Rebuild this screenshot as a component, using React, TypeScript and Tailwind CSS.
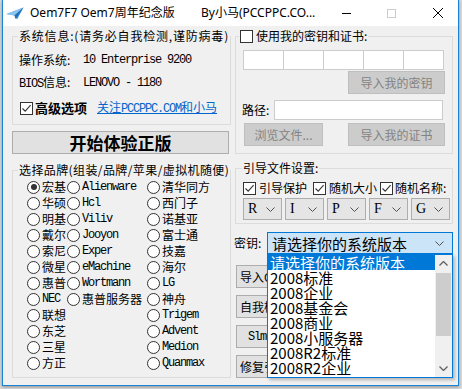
import React from 'react';
import clsx from 'clsx';

const MONO = "font-['Liberation_Mono','Noto_Sans_CJK_SC',monospace] text-[12px] tracking-[-1.2px]";

const Check = ({ on }: { on?: boolean }) => (
  <span className="w-[13px] h-[13px] border border-[#333333] bg-white flex items-center justify-center shrink-0">
    {on && (
      <svg width="11" height="11" viewBox="0 0 11 11">
        <path d="M1.5 5.5 L4.2 8.2 L9.6 2.2" stroke="#333333" strokeWidth="1.1" fill="none" />
      </svg>
    )}
  </span>
);

const Radio = ({ on }: { on?: boolean }) => (
  <span className="w-[13px] h-[13px] rounded-full border border-[#333333] bg-white flex items-center justify-center shrink-0">
    {on && <span className="w-[6px] h-[6px] rounded-full bg-[#333333]" />}
  </span>
);

const Btn = ({ className, children, disabled }: { className?: string; children: React.ReactNode; disabled?: boolean }) => (
  <div
    className={clsx(
      'h-[23px] flex items-center border whitespace-nowrap overflow-hidden',
      disabled ? 'bg-[#cccccc] border-[#bfbfbf] text-[#838383]' : 'bg-[#e1e1e1] border-[#adadad] text-black',
      className
    )}
  >
    {children}
  </div>
);

const Chevron = () => (
  <svg width="9" height="5" viewBox="0 0 9 5" className="shrink-0">
    <path d="M0.5 0.5 L4.5 4.5 L8.5 0.5" stroke="#505050" strokeWidth="1" fill="none" />
  </svg>
);

type Brand = { t: string; latin?: boolean } | null;
const BRANDS: Brand[][] = [
  [{ t: '宏基' }, { t: 'Alienware', latin: true }, { t: '清华同方' }],
  [{ t: '华硕' }, { t: 'Hcl', latin: true }, { t: '西门子' }],
  [{ t: '明基' }, { t: 'Viliv', latin: true }, { t: '诺基亚' }],
  [{ t: '戴尔' }, { t: 'Jooyon', latin: true }, { t: '富士通' }],
  [{ t: '索尼' }, { t: 'Exper', latin: true }, { t: '技嘉' }],
  [{ t: '微星' }, { t: 'eMachine', latin: true }, { t: '海尔' }],
  [{ t: '惠普' }, { t: 'Wortmann', latin: true }, { t: 'LG', latin: true }],
  [{ t: 'NEC', latin: true }, { t: '惠普服务器' }, { t: '神舟' }],
  [{ t: '联想' }, null, { t: 'Trigem', latin: true }],
  [{ t: '东芝' }, null, { t: 'Advent', latin: true }],
  [{ t: '三星' }, null, { t: 'Medion', latin: true }],
  [{ t: '方正' }, null, { t: 'Quanmax', latin: true }],
];

const VERSIONS = ['请选择你的系统版本', '2008标准', '2008企业', '2008基金会', '2008商业', '2008小服务器', '2008R2标准', '2008R2企业'];

function TitleBar() {
  return (
    <div className="h-[26px] bg-white flex items-center shrink-0 font-['Noto_Sans','Noto_Sans_CJK_SC',sans-serif] text-[12px]">
      <svg width="18" height="13" viewBox="0 0 18 13" className="ml-[3px] shrink-0">
        <path d="M0.5 7 L17.5 0.5 L11 12.5 L8.5 8.5 Z" fill="#3b8fd6" />
        <path d="M0.5 7 L17.5 0.5 L8.5 8.5 Z" fill="#8cc4f0" />
        <path d="M8.5 8.5 L17.5 0.5 L9.5 12 Z" fill="#1f6fb8" />
      </svg>
      <span className="ml-[6px] w-[171px] whitespace-nowrap">Oem7F7 Oem7周年纪念版</span>
      <span className="whitespace-nowrap">By小马(PCCPPC.CO...</span>
      <span className="ml-auto w-[9px] h-px bg-black" />
      <span className="ml-[36px] w-[9px] h-[9px] border border-[#cccccc]" />
      <svg width="10" height="10" viewBox="0 0 10 10" className="ml-[37px] mr-[15px]">
        <path d="M0 0 L10 10 M10 0 L0 10" stroke="#000" strokeWidth="1" />
      </svg>
    </div>
  );
}

function LeftColumn() {
  return (
    <div className="ml-[9px] w-[217px] flex flex-col">
      <fieldset className="mt-[2px] border border-[#dcdcdc]">
        <legend className="ml-[5px] px-[1px] whitespace-nowrap tracking-[0.8px]">系统信息:(请务必自我检测,谨防病毒)</legend>
        <div className="pl-[6px] pt-[8px] pb-[8px] flex flex-col">
          <div className="h-[16px] flex items-center">
            <span className="w-[64px]">操作系统:</span>
            <span className={MONO}>10 Enterprise 9200</span>
          </div>
          <div className="mt-[7px] h-[16px] flex items-center">
            <span className="w-[64px]"><span className={MONO}>BIOS</span>信息:</span>
            <span className={MONO}>LENOVO - 1180</span>
          </div>
          <div className="mt-[9px] h-[16px] flex items-center">
            <span className="ml-[1px]"><Check on /></span>
            <span className="ml-[2px] font-bold text-[13px]">高级选项</span>
            <span className="ml-[10px] text-[#0066cc] underline whitespace-nowrap">
              关注<span className={MONO}>PCCPPC.COM</span>和小马
            </span>
          </div>
        </div>
      </fieldset>
      <Btn className="mt-[6px] justify-center font-bold text-[17px]">开始体验正版</Btn>
      <fieldset className="mt-[8px] border border-[#dcdcdc]">
        <legend className="ml-[5px] px-[1px] whitespace-nowrap tracking-[0.4px]">选择品牌(组装/品牌/苹果/虚拟机随便)</legend>
        <div className="pl-[14px] pt-[1px] pb-[6px] grid grid-cols-[40px_80px_1fr]">
          {BRANDS.flatMap((row, r) =>
            row.map((b, c) => (
              <div key={`${r}-${c}`} className="h-[16px] flex items-center">
                {b && (
                  <>
                    <Radio on={r === 0 && c === 0} />
                    <span className={clsx('ml-[2px] whitespace-nowrap', b.latin && MONO)}>{b.t}</span>
                  </>
                )}
              </div>
            ))
          )}
        </div>
      </fieldset>
    </div>
  );
}

function RightColumn() {
  return (
    <div className="ml-[4px] w-[220px] flex flex-col">
      <fieldset className="ml-[2px] mt-[2px] w-[218px] border border-[#dcdcdc]">
        <legend className="ml-[3px] px-[1px] flex items-center whitespace-nowrap">
          <Check />
          <span className="ml-[3px]">使用我的密钥和证书:</span>
        </legend>
        <div className="pl-[7px] pt-[6px] pb-[7px] flex flex-col">
          <div className="w-[201px] h-[20px] border border-[#cccccc] bg-white flex">
            <span className="w-[40px] border-r border-[#cccccc]" />
            <span className="w-[40px] border-r border-[#cccccc]" />
            <span className="w-[40px] border-r border-[#cccccc]" />
            <span className="w-[40px] border-r border-[#cccccc]" />
            <span className="w-[39px]" />
          </div>
          <Btn disabled className="mt-[1px] ml-[105px] w-[97px] justify-center">导入我的密钥</Btn>
          <div className="mt-[6px] h-[20px] flex items-center">
            <span className="w-[32px] -ml-px">路径:</span>
            <span className="w-[169px] h-[20px] border border-[#cccccc] bg-white" />
          </div>
          <div className="mt-[3px] flex">
            <Btn disabled className="ml-[1px] w-[79px] justify-center">浏览文件...</Btn>
            <Btn disabled className="ml-[25px] w-[97px] justify-center">导入我的证书</Btn>
          </div>
        </div>
      </fieldset>
      <fieldset className="ml-[2px] mt-[6px] w-[218px] border border-[#dcdcdc]">
        <legend className="ml-[6px] px-[1px] whitespace-nowrap">引导文件设置:</legend>
        <div className="pl-[7px] pt-[4px] pb-[3px] flex flex-col">
          <div className="h-[16px] flex items-center whitespace-nowrap">
            <Check on />
            <span className="ml-[3px]">引导保护</span>
            <span className="ml-[6px]"><Check on /></span>
            <span className="ml-[3px]">随机大小</span>
            <span className="ml-[3px]"><Check on /></span>
            <span className="ml-[2px]">随机名称:</span>
          </div>
          <div className="mt-[2px] flex gap-[3px]">
            {['R', 'I', 'P', 'F', 'G'].map((l) => (
              <div key={l} className="w-[39px] h-[22px] border border-[#adadad] bg-[#e5e5e5] flex items-center pl-[4px] pr-[6px]">
                <span className="font-['Liberation_Serif',serif] text-[14px] flex-1">{l}</span>
                <Chevron />
              </div>
            ))}
          </div>
        </div>
      </fieldset>
      <div className="mt-[8px] h-[22px] flex items-center">
        <span className="ml-[1px] w-[33px]">密钥:</span>
        <div className="w-[186px] h-[22px] border border-[#0078d7] bg-[#cce4f7] flex items-center pl-[4px] pr-[8px]">
          <span className="flex-1 text-[15px] leading-[15px] whitespace-nowrap">请选择你的系统版本</span>
          <Chevron />
        </div>
      </div>
      <div className="mt-[11px] ml-[3px] flex flex-col gap-[7px]">
        <Btn className="w-[140px] pl-[3px]">导入OEM信息</Btn>
        <Btn className="w-[140px] pl-[3px]">自我检测</Btn>
        <Btn className="w-[140px] pl-[11px]"><span className={MONO}>Slmgr</span></Btn>
        <Btn className="w-[140px] pl-[3px]">修复引导</Btn>
      </div>
    </div>
  );
}

function DropList() {
  return (
    <div className="absolute left-[264px] top-[228px] w-[186px] h-[124px] border border-[#0078d7] bg-white flex shadow-[2px_2px_3px_rgba(0,0,0,0.25)]">
      <div className="flex-1 flex flex-col">
        {VERSIONS.map((v, i) => (
          <div
            key={v}
            className={clsx(
              'h-[15px] leading-[15px] text-[15px] pl-[2px] whitespace-nowrap shrink-0',
              i === 0 ? 'bg-[#0078d7] text-white' : 'text-black'
            )}
          >
            {v}
          </div>
        ))}
      </div>
      <div className="w-[17px] bg-[#f0f0f0] flex flex-col items-center">
        <div className="h-[17px] flex items-center justify-center">
          <svg width="9" height="5" viewBox="0 0 9 5">
            <path d="M0.5 4.5 L4.5 0.5 L8.5 4.5" stroke="#606060" strokeWidth="1.3" fill="none" />
          </svg>
        </div>
        <div className="mt-[1px] w-[15px] h-[63px] bg-[#cdcdcd]" />
        <div className="mt-auto h-[17px] flex items-center justify-center">
          <svg width="9" height="5" viewBox="0 0 9 5">
            <path d="M0.5 0.5 L4.5 4.5 L8.5 0.5" stroke="#606060" strokeWidth="1.3" fill="none" />
          </svg>
        </div>
      </div>
    </div>
  );
}

export default function App() {
  return (
    <div className="w-[462px] h-[389px] bg-[#d9d9d9] overflow-hidden font-['Noto_Sans_CJK_SC',sans-serif] text-[12px] leading-[16px] text-black">
      <div className="ml-[2px] w-[457px] h-[386px] border-x border-b border-[#1883d7] bg-[#f0f0f0] flex flex-col shadow-[0_1px_3px_rgba(0,0,0,0.35)]">
        <TitleBar />
        <div className="relative flex-1 flex">
          <LeftColumn />
          <RightColumn />
          <DropList />
        </div>
      </div>
    </div>
  );
}
